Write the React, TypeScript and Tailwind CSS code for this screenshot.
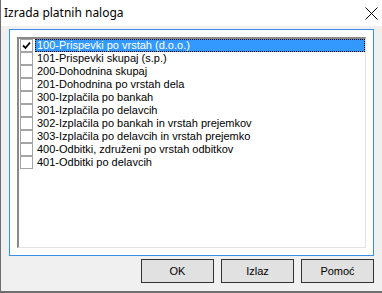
import React from "react";

const items = [
  "100-Prispevki po vrstah (d.o.o.)",
  "101-Prispevki skupaj (s.p.)",
  "200-Dohodnina skupaj",
  "201-Dohodnina po vrstah dela",
  "300-Izplačila po bankah",
  "301-Izplačila po delavcih",
  "302-Izplačila po bankah in vrstah prejemkov",
  "303-Izplačila po delavcih in vrstah prejemko",
  "400-Odbitki, združeni po vrstah odbitkov",
  "401-Odbitki po delavcih",
];

const sysFont = { fontFamily: "'Liberation Sans', Arial, sans-serif" };

export default function App() {
  return (
    <div
      className="w-[382px] h-[293px] bg-[#f0f0f0] border-l border-b-2 border-[#6e6e6e] flex flex-col overflow-hidden"
      style={sysFont}
    >
      <div className="h-[26px] bg-white flex items-center justify-between pl-[3px] pr-[8px] shrink-0">
        <span className="text-[12px] text-black" style={{ fontFamily: "'Noto Sans', 'Open Sans', sans-serif" }}>
          Izrada platnih naloga
        </span>
        <svg width="13" height="13" viewBox="0 0 13 13" className="-mr-[4px]">
          <path d="M0.5 0.5 L12.5 12.5 M12.5 0.5 L0.5 12.5" stroke="#000" strokeWidth="1" />
        </svg>
      </div>
      <div className="ml-[8px] mt-[3px] w-[365px] h-[227px] border border-[#3b8ee6] bg-white p-[7px] shrink-0">
        <div className="h-full w-full border-t-2 border-l-2 border-t-[#8a8a8a] border-l-[#8a8a8a] border-r border-b border-r-[#e3e3e3] border-b-[#e3e3e3]">
          <ul className="text-[11px] leading-[13px] text-black">
            {items.map((t, i) => (
              <li key={t} className="flex items-center h-[13px]">
                <span className="w-[13px] h-[13px] ml-[1px] mr-[2px] border border-[#a4a4a4] bg-white flex items-center justify-center shrink-0">
                  {i === 0 && (
                    <svg width="9" height="9" viewBox="0 0 9 9">
                      <path d="M1 4.5 L3.5 7 L8 1.5" fill="none" stroke="#000" strokeWidth="1.8" />
                    </svg>
                  )}
                </span>
                {i === 0 ? (
                  <span className="flex-1 h-[13px] bg-[#3399ff] text-white border border-dotted border-[#000] flex items-center pl-[1px] whitespace-nowrap">
                    {t}
                  </span>
                ) : (
                  <span className="pl-[2px] whitespace-nowrap">{t}</span>
                )}
              </li>
            ))}
          </ul>
        </div>
      </div>
      <div className="flex justify-end gap-[7px] pr-[8px] mt-[3px]">
        {["OK", "Izlaz", "Pomoć"].map((b) => (
          <button
            key={b}
            className="w-[73px] h-[24px] border border-[#333] bg-[#e1e1e1] text-[11px] text-black flex items-center justify-center"
          >
            {b}
          </button>
        ))}
      </div>
    </div>
  );
}
